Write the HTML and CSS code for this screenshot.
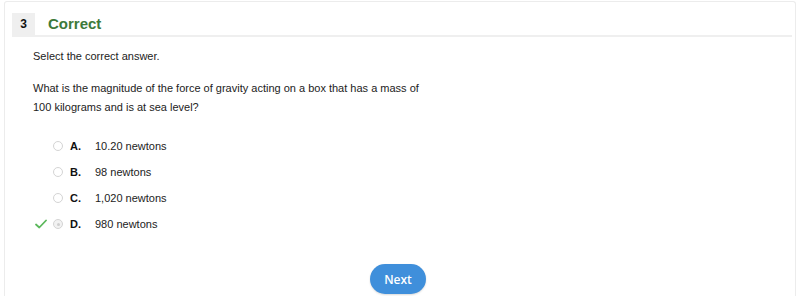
FILE: index.html
```html
<!DOCTYPE html>
<html>
<head>
<meta charset="utf-8">
<link rel="stylesheet" href="styles.css">
</head>
<body>
<div class="card">
  <div class="header">
    <div class="num">3</div>
    <div class="status">Correct</div>
  </div>
  <div class="body">
    <p class="instr">Select the correct answer.</p>
    <p class="question">What is the magnitude of the force of gravity acting on a box that has a mass of<br>100 kilograms and is at sea level?</p>
    <ul class="options">
      <li class="opt"><span class="mark"></span><span class="radio"></span><span class="letter">A.</span><span class="text">10.20 newtons</span></li>
      <li class="opt"><span class="mark"></span><span class="radio"></span><span class="letter">B.</span><span class="text">98 newtons</span></li>
      <li class="opt"><span class="mark"></span><span class="radio"></span><span class="letter">C.</span><span class="text">1,020 newtons</span></li>
      <li class="opt"><span class="mark"><svg width="12" height="10" viewBox="0 0 12 10"><path d="M1 5.5 L4.3 8.5 L11 1.5" fill="none" stroke="#5cb85c" stroke-width="1.8" stroke-linecap="round" stroke-linejoin="round"/></svg></span><span class="radio checked"></span><span class="letter">D.</span><span class="text">980 newtons</span></li>
    </ul>
    <div class="actions"><button class="next">Next</button></div>
  </div>
</div>
</body>
</html>
```
FILE: styles.css
```css
html, body { margin: 0; padding: 0; background: #fff; }
body { font-family: "Liberation Sans", Arial, sans-serif; color: #222; }
.card {
  margin: 1px 4px 0 4px;
  height: 300px;
  border: 1px solid #ececec;
  border-bottom: none;
  border-radius: 3px 3px 0 0;
  box-sizing: border-box;
  padding: 11px 0 0 7px;
}
.header {
  display: flex;
  align-items: stretch;
  height: 22px;
  margin-right: 3px;
  border-bottom: 2px solid #efefef;
}
.num {
  width: 23px;
  background: #efefef;
  font-weight: bold;
  font-size: 12px;
  display: flex; align-items: center; justify-content: center;
  color: #111;
}
.status {
  margin-left: 13px;
  color: #3d7a3a;
  font-weight: bold;
  font-size: 15px;
  line-height: 21px;
}
.body { padding-left: 21px; font-size: 11px; }
.instr { margin: 11px 0 0 0; line-height: 16px; }
.question { margin: 15px 0 0 0; line-height: 19px; }
.options { list-style: none; margin: 16px 0 0 0; padding: 0; }
.opt { display: flex; align-items: center; height: 26px; }
.mark { width: 18px; display: flex; align-items: center; justify-content: flex-start; margin-left: 2px; }
.radio {
  width: 10px; height: 10px;
  border: 1px solid #d4d4d4;
  border-radius: 50%;
  box-sizing: border-box;
  background: #fff;
  position: relative;
}
.radio.checked { background: #f2f2f2; }
.radio.checked::after {
  content: ""; position: absolute; left: 2.5px; top: 2.5px;
  width: 3px; height: 3px; border-radius: 50%; background: #cfcfcf;
}
.letter { font-weight: bold; margin-left: 7px; width: 25px; color: #111; }
.text { color: #222; }
.actions { display: flex; justify-content: center; margin-top: 27px; padding-right: 32px; }
.next {
  width: 56px; height: 30px;
  border: none; border-radius: 15px;
  background: #3f8fdb;
  color: #fff;
  font-family: "Open Sans", sans-serif;
  font-weight: 600;
  font-size: 12px;
  box-shadow: 0 1px 2px rgba(0,0,0,0.15);
}
```
